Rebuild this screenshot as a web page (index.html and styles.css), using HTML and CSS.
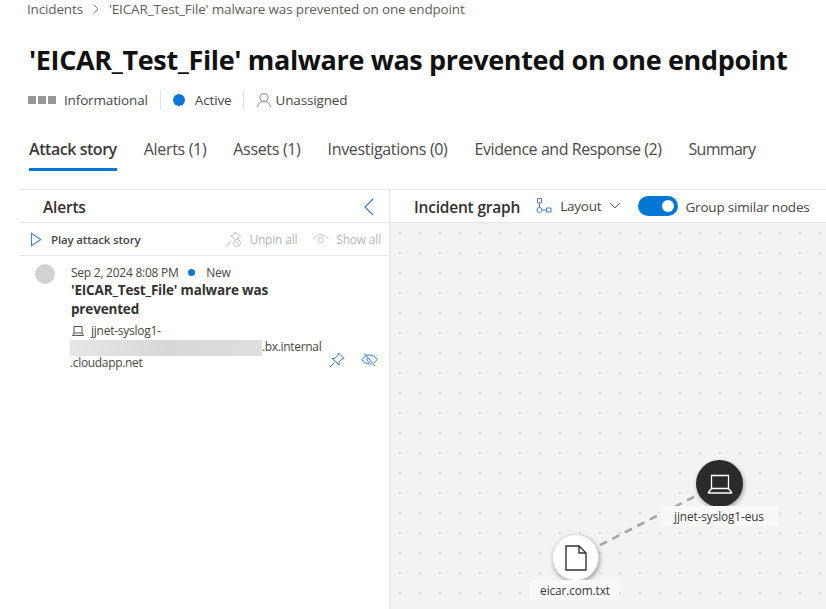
FILE: index.html
```html
<!DOCTYPE html>
<html lang="en">
<head>
<meta charset="utf-8">
<title>Incident</title>
<link rel="stylesheet" href="styles.css">
</head>
<body>
<header class="top">
  <nav class="crumbs">
    <span>Incidents</span>
    <svg class="crumb-sep" width="8" height="12" viewBox="0 0 8 12"><path d="M1.500 1.500 6 6l-4.500 4.500" fill="none" stroke="#8a8a8a"/></svg>
    <span>'EICAR_Test_File' malware was prevented on one endpoint</span>
  </nav>
  <h1 class="title">'EICAR_Test_File' malware was prevented on one endpoint</h1>
  <div class="meta">
    <span class="sev"><i></i><i></i><i></i></span>
    <span class="meta-text">Informational</span>
    <span class="meta-div"></span>
    <span class="dot-active"></span>
    <span class="meta-text">Active</span>
    <span class="meta-div"></span>
    <svg class="person" width="16" height="16" viewBox="0 0 16 16"><circle cx="8" cy="5.500" r="4" fill="none" stroke="#8c8c8c"/><path d="M1.500 15.500c0-3.500 2.500-6 6.500-6s6.500 2.500 6.500 6" fill="none" stroke="#8c8c8c"/></svg>
    <span class="meta-text">Unassigned</span>
  </div>
  <div class="tabs">
    <span class="tab tab-on">Attack story</span>
    <span class="tab">Alerts (1)</span>
    <span class="tab">Assets (1)</span>
    <span class="tab">Investigations (0)</span>
    <span class="tab tab-wide">Evidence and Response (2)</span>
    <span class="tab tab-last">Summary</span>
  </div>
</header>
<main class="split">
  <section class="left">
    <div class="left-head">
      <h2>Alerts</h2>
      <svg width="10" height="18" viewBox="0 0 10 18"><path d="M9 1 1 9l8 8" fill="none" stroke="#2a78d0" stroke-width="1.100"/></svg>
    </div>
    <div class="toolbar">
      <svg width="12" height="15" viewBox="0 0 12 15"><path d="M1.500 1.200v12.600L10.800 7.500z" fill="none" stroke="#3f7fd8" stroke-width="1.100"/></svg>
      <span class="play">Play attack story</span>
      <span class="tool-off">
        <svg width="16" height="17" viewBox="0 0 16 17"><path d="M9 1l5.500 4.500-3 1.500-1.500 2.500-5.500-5 3-.5zM5 9.500 1 15.500" fill="none" stroke="#c4c4c4"/><circle cx="11" cy="12" r="3.500" fill="#fff" stroke="#c4c4c4"/><path d="M8.500 9.500l5 5" stroke="#c4c4c4"/></svg>
        Unpin all
      </span>
      <span class="tool-off tool-show">
        <svg width="16" height="12" viewBox="0 0 16 12"><path d="M.5 6C2.500 3 5 1.500 8 1.500S13.500 3 15.500 6" fill="none" stroke="#c4c4c4"/><circle cx="8" cy="7" r="2.500" fill="none" stroke="#c4c4c4"/></svg>
        Show all
      </span>
    </div>
    <article class="alert">
      <span class="avatar"></span>
      <div class="alert-body">
        <div class="alert-date">Sep 2, 2024 8:08 PM <span class="dot-new"></span> New</div>
        <div class="alert-title">'EICAR_Test_File' malware was prevented</div>
        <div class="alert-host">
          <svg width="12" height="10" viewBox="0 0 12 10"><path d="M2 .5h8v6.500H2zM.5 9.500 2 7m8 0 1.500 2.500M.5 9.500h11" fill="none" stroke="#555"/></svg>
          jjnet-syslog1-
        </div>
        <div class="alert-line"><span class="blur"></span>.bx.internal</div>
        <div class="alert-line">.cloudapp.net</div>
      </div>
      <div class="alert-actions">
        <svg width="16" height="16" viewBox="0 0 16 16"><path d="M9.500 1 15 6.500l-2 .5-3 3 .3 3L3 6.500l3-.3 3-3zM5.500 10.500 1 15" fill="none" stroke="#2a78d0"/></svg>
        <svg width="17" height="14" viewBox="0 0 17 14"><path d="M1 6.500C3 3.500 5.500 2 8.500 2s5.500 1.500 7.500 4.500c-1 1.500-2 2.500-3 3.300M10.500 11c-.6.100-1.300.100-2 0-3 0-5.500-1.500-7.500-4.500" fill="none" stroke="#2a78d0"/><path d="M6.500 5A2.500 2.500 0 0 0 9 9" fill="none" stroke="#2a78d0"/><path d="M3.500 .5 14 13" stroke="#2a78d0"/></svg>
      </div>
    </article>
  </section>
  <section class="right">
    <div class="right-head">
      <h2>Incident graph</h2>
      <svg class="layout-ico" width="16" height="16" viewBox="0 0 16 16"><path d="M1.500.5h4v4.500h-4zM3.500 5v4.500" fill="none" stroke="#5b6fd8"/><circle cx="3.500" cy="12" r="2.500" fill="none" stroke="#3f7fd8"/><path d="M6 12h4.500M10.500 10H15v4h-4.500z" fill="none" stroke="#3f7fd8"/></svg>
      <span class="layout">Layout</span>
      <svg class="chev" width="12" height="7" viewBox="0 0 12 7"><path d="M1 1l5 5 5-5" fill="none" stroke="#666"/></svg>
      <span class="toggle"><i></i></span>
      <span class="group">Group similar nodes</span>
    </div>
    <div class="canvas">
      <svg class="edge" width="146" height="76" viewBox="0 0 146 76"><path d="M1 75 145 1" stroke="#a6a6a6" stroke-width="2.600" stroke-dasharray="8 6" fill="none"/></svg>
      <div class="node node-dark">
        <svg width="26" height="20" viewBox="0 0 26 20"><path d="M4.500 1.500h17v13h-17zM1 19 4.500 14.500m17 0L25 19M1 19h24" fill="none" stroke="#fff" stroke-width="1.300"/></svg>
      </div>
      <div class="label label-host">jjnet-syslog1-eus</div>
      <div class="node node-light">
        <svg width="22" height="26" viewBox="0 0 22 26"><path d="M1 1h13l7 7v17H1zM14 1v7h7" fill="none" stroke="#333" stroke-width="1.400"/></svg>
      </div>
      <div class="label label-file">eicar.com.txt</div>
    </div>
  </section>
</main>
</body>
</html>
```
FILE: styles.css
```css
* { box-sizing: border-box; }
html, body { margin: 0; height: 100%; }
body {
  width: 826px;
  height: 609px;
  overflow: hidden;
  background: #fff;
  font-family: "Open Sans", "Noto Sans", sans-serif;
  color: #323130;
  display: flex;
  flex-direction: column;
}
.top { padding: 0 0 0 27px; height: 189px; flex: none; }
.crumbs {
  display: flex;
  align-items: center;
  gap: 8px;
  height: 18px;
  font-size: 13.500px;
  letter-spacing: -.15px;
  color: #605e5c;
}
.crumb-sep { margin: 0 1px 0 1px; }
.title {
  margin: 25px 0 0 2px;
  font-size: 27px;
  line-height: 34px;
  font-weight: 700;
  letter-spacing: -.36px;
  color: #111;
  white-space: nowrap;
}
.meta { display: flex; align-items: center; height: 20px; margin: 13px 0 0 1px; font-size: 13.500px; letter-spacing: -.15px; }
.meta-text { color: #484644; }
.sev { display: flex; gap: 2px; margin-right: 8px; }
.sev i { width: 8px; height: 8px; background: #979797; }
.meta-div { width: 1px; height: 20px; background: #e1e1e1; margin: 0 12px; }
.dot-active { width: 12px; height: 12px; border-radius: 50%; background: #0b78d7; margin: 0 10px 0 0; }
.person { margin-right: 3px; }
.tabs { display: flex; gap: 27px; margin: 27px 0 0 2px; height: 34px; font-size: 16px; letter-spacing: -.32px; color: #4a4a48; }
.tab { height: 34px; line-height: 24px; white-space: nowrap; }
.tab-on { font-weight: 600; border-bottom: 3px solid #0078d4; color: #3b3a39; letter-spacing: -.45px; }
.tab-wide { letter-spacing: -.44px; }
.tab-last { letter-spacing: -.72px; }
.split { flex: 1; display: flex; min-height: 0; margin-left: 19px; }
.left { width: 370px; flex: none; border-top: 1px solid #e6e6e6; }
.left-head { display: flex; align-items: center; justify-content: space-between; height: 33px; padding: 1px 15px 0 24px; border-bottom: 1px solid #e6e6e6; }
h2 { margin: 0; font-size: 15.500px; font-weight: 600; color: #323130; letter-spacing: -.2px; }
.toolbar { display: flex; align-items: center; height: 33px; padding: 0 8px 0 11px; border-bottom: 1px solid #e6e6e6; font-size: 12px; }
.play { margin-left: 9px; font-size: 11.500px; font-weight: 600; color: #484644; letter-spacing: -.15px; }
.tool-off { display: flex; align-items: center; gap: 7px; color: #b5b5b5; letter-spacing: -.2px; margin-left: auto; }
.tool-show { margin-left: 16px; }
.alert { display: flex; padding: 7px 0 0 16px; }
.avatar { width: 20px; height: 20px; border-radius: 50%; background: #d2d2d2; flex: none; margin-top: 1px; }
.alert-body { width: 250px; margin-left: 16px; font-size: 12px; color: #484644; letter-spacing: -.25px; }
.alert-date { height: 18px; line-height: 20px; }
.dot-new { display: inline-block; width: 7px; height: 7px; border-radius: 50%; background: #0b78d7; margin: 0 8px 0 7px; vertical-align: 1px; }
.alert-title { font-size: 13.500px; line-height: 19px; font-weight: 700; color: #323130; letter-spacing: -.17px; width: 205px; }
.alert-host { display: flex; align-items: center; gap: 7px; height: 19px; margin: 2px 0 0 1px; }
.alert-line { display: flex; align-items: flex-start; height: 16px; line-height: 14px; margin-left: -1px; white-space: nowrap; letter-spacing: -.33px; }
.blur { width: 192px; height: 16px; flex: none; background: linear-gradient(90deg, #e6e6e6, #d8d8d8 50%, #dedede); filter: blur(.5px); }
.alert-actions { display: flex; align-items: center; gap: 16px; height: 16px; margin: 89px 0 0 8px; }
.right { flex: 1; display: flex; flex-direction: column; border-left: 1px solid #e6e6e6; border-top: 1px solid #e6e6e6; min-width: 0; }
.right-head { display: flex; align-items: center; height: 33px; padding: 1px 0 0 24px; flex: none; border-bottom: 1px solid #e6e6e6; }
.layout-ico { margin-left: 16px; margin-top: -2px; }
.layout { margin-left: 8px; font-size: 13.500px; letter-spacing: -.2px; color: #484644; margin-top: -2px; }
.chev { margin-left: 8px; margin-top: -2px; }
.toggle { width: 40px; height: 20px; margin: -2px 0 0 17px; border-radius: 10px; background: #0078d4; display: flex; align-items: center; justify-content: flex-end; padding-right: 4px; }
.toggle i { width: 12px; height: 12px; border-radius: 50%; background: #fff; }
.group { margin-left: 7px; font-size: 13.500px; letter-spacing: -.2px; color: #484644; white-space: nowrap; }
.canvas {
  position: relative;
  flex: 1;
  overflow: hidden;
  background-color: #f3f3f3;
  background-image: radial-gradient(circle, #d9d9d9 1px, transparent 1.300px);
  background-size: 20px 20px;
}
.edge { position: absolute; left: 184px; top: 260px; }
.node { position: absolute; border-radius: 50%; display: flex; align-items: center; justify-content: center; box-shadow: 1px 2px 4px rgba(0,0,0,.35); }
.node-dark { left: 306px; top: 237px; width: 47px; height: 47px; background: #2b2b2b; }
.node-light { left: 162px; top: 311px; width: 47px; height: 47px; background: #fff; border: 1px solid #dcdcdc; }
.label { position: absolute; height: 20px; line-height: 20px; text-align: center; font-size: 11.800px; border-radius: 3px; background: #f8f8f8; color: #3b3a39; letter-spacing: -.1px; white-space: nowrap; }
.label-host { left: 270px; top: 283px; width: 118px; }
.label-file { left: 140px; top: 357px; width: 90px; }
```
